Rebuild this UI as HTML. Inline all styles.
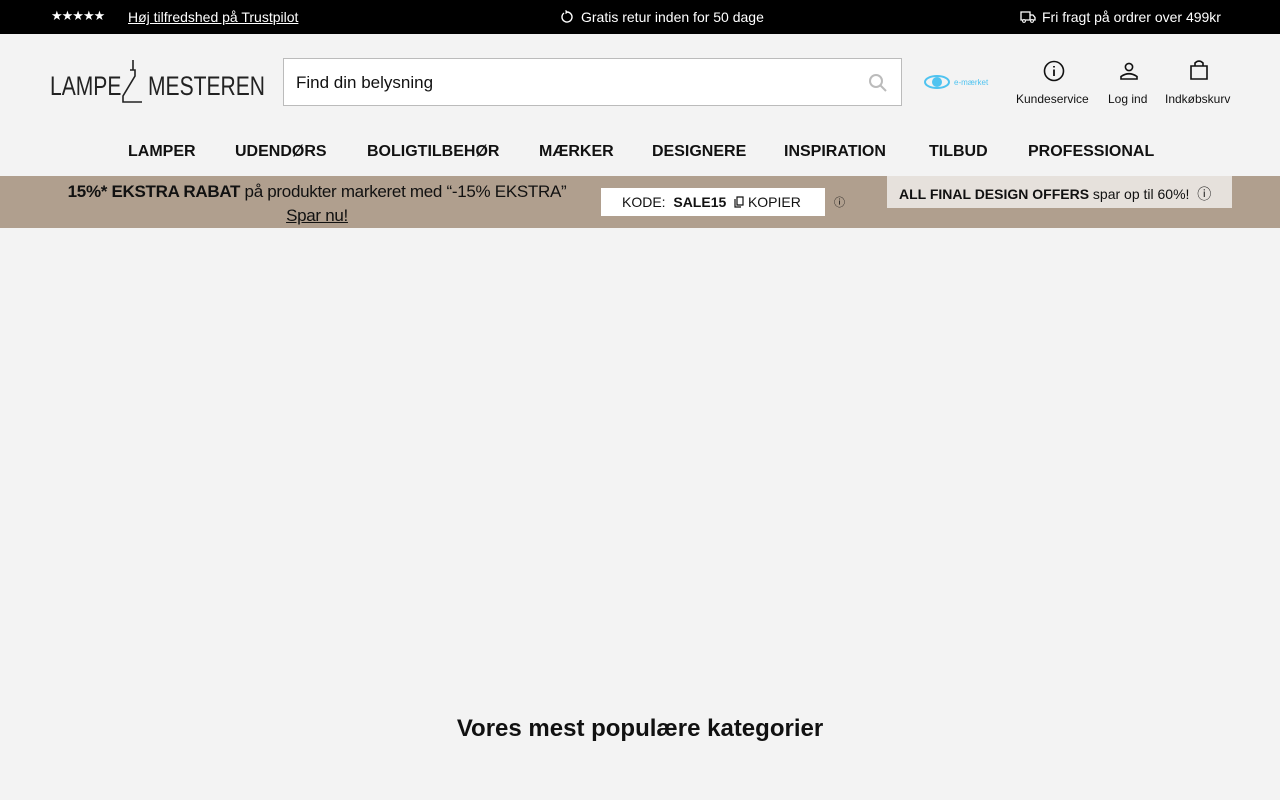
<!DOCTYPE html>
<html><head><meta charset="utf-8"><style>
*{margin:0;padding:0;box-sizing:border-box}
body{width:1280px;height:800px;background:#f3f3f3;font-family:"Liberation Sans",sans-serif;color:#111;overflow:hidden;position:relative}
.top{position:absolute;top:0;left:0;width:1280px;height:34px;background:#000;color:#fff;font-size:14px}
.top span{position:absolute;top:9px}
.abs{position:absolute}
.nav{position:absolute;top:143px;left:0;width:1280px;font-size:16px;font-weight:bold}
.nav span{position:absolute}
.promo{position:absolute;top:176px;left:0;width:1280px;height:52px;background:#b09f8e}
.ic{position:absolute;font-size:12px;text-align:center}
.logo{position:absolute;top:71px;font-size:27px;color:#222;transform-origin:left top;white-space:nowrap}
</style></head><body>
<div class="top">
<span style="left:51px;top:8px;font-size:13px;letter-spacing:-1px">★★★★★</span>
<span style="left:128px;text-decoration:underline">Høj tilfredshed på Trustpilot</span>
<svg class="abs" style="left:560px;top:10px" width="14" height="14"><path d="M4 3A5 5 0 1 0 7 2L5.5 0.5M7 2L5.5 3.5" fill="none" stroke="#fff" stroke-width="1.4"/></svg>
<span style="left:581px">Gratis retur inden for 50 dage</span>
<svg class="abs" style="left:1020px;top:11px" width="16" height="12"><path d="M1 1H10V9H1ZM10 4H13L15 6.5V9H10" fill="none" stroke="#fff" stroke-width="1.3"/><circle cx="4" cy="10" r="1.4" fill="#000" stroke="#fff"/><circle cx="12" cy="10" r="1.4" fill="#000" stroke="#fff"/></svg>
<span style="left:1042px">Fri fragt på ordrer over 499kr</span>
</div>
<div class="logo" style="left:50px;transform:scaleX(0.78)">LAMPE</div>
<div class="logo" style="left:148px;transform:scaleX(0.78)">MESTEREN</div>
<svg class="abs" style="left:118px;top:58px" width="30" height="46"><path d="M15 2V12M12 12H17V18L5 38V44H24" fill="none" stroke="#222" stroke-width="1.6"/></svg>
<div class="abs" style="left:283px;top:58px;width:619px;height:48px;background:#fff;border:1px solid #bbb"><span class="abs" style="left:12px;top:14px;font-size:17px">Find din belysning</span>
<svg class="abs" style="left:584px;top:14px" width="20" height="20"><circle cx="8" cy="8" r="6" fill="none" stroke="#bbb" stroke-width="2"/><path d="M12.5 12.5L18 18" stroke="#bbb" stroke-width="2"/></svg></div>
<svg class="abs" style="left:924px;top:73px" width="66" height="18"><ellipse cx="13" cy="9" rx="12" ry="6" fill="none" stroke="#4fc3f0" stroke-width="2"/><circle cx="13" cy="9" r="5" fill="#4fc3f0"/><text x="30" y="12" font-size="8" fill="#4fc3f0" font-family="Liberation Sans">e-mærket</text></svg>
<svg class="abs" style="left:1043px;top:60px" width="22" height="22"><circle cx="11" cy="11" r="9.5" fill="none" stroke="#111" stroke-width="1.6"/><path d="M11 9.5V16M11 6V7.5" stroke="#111" stroke-width="1.8"/></svg>
<svg class="abs" style="left:1118px;top:61px" width="22" height="20"><circle cx="11" cy="6" r="3.6" fill="none" stroke="#111" stroke-width="1.6"/><path d="M3 18V15.5Q11 10 19 15.5V18Z" fill="none" stroke="#111" stroke-width="1.6"/></svg>
<svg class="abs" style="left:1188px;top:59px" width="22" height="22"><path d="M3 7H19V20H3Z M7 7V4Q11 0 15 4V7" fill="none" stroke="#111" stroke-width="1.6"/></svg>
<div class="ic" style="left:1016px;top:92px">Kundeservice</div>
<div class="ic" style="left:1108px;top:92px">Log ind</div>
<div class="ic" style="left:1165px;top:92px">Indkøbskurv</div>
<div class="nav">
<span style="left:128px">LAMPER</span><span style="left:235px">UDENDØRS</span><span style="left:367px">BOLIGTILBEHØR</span><span style="left:539px">MÆRKER</span><span style="left:652px">DESIGNERE</span><span style="left:784px">INSPIRATION</span><span style="left:929px">TILBUD</span><span style="left:1028px">PROFESSIONAL</span>
</div>
<div class="promo">
<div class="abs" style="left:40px;width:554px;top:4px;text-align:center;font-size:17px;line-height:24px;letter-spacing:-0.3px"><b>15%* EKSTRA RABAT</b> på produkter markeret med “-15% EKSTRA”<br><u>Spar nu!</u></div>
<div class="abs" style="left:601px;top:12px;width:224px;height:28px;background:#fff;font-size:14px;padding:6px 0 0 21px">KODE:&nbsp; <b>SALE15</b> &nbsp;<svg width="10" height="12" style="vertical-align:-1px"><path d="M3 1H9V9H3ZM1 3V11H7" fill="none" stroke="#111" stroke-width="1.2"/></svg> KOPIER</div>
<div class="abs" style="left:834px;top:18px;font-size:11px">ⓘ</div>
<div class="abs" style="left:887px;top:0;width:345px;height:32px;background:#e6e1dc;font-size:14px;padding:8px 0 0 12px"><b>ALL FINAL DESIGN OFFERS</b> spar op til 60%! &nbsp;ⓘ</div>
</div>
<div class="abs" style="left:0;width:1280px;top:715px;text-align:center;font-size:24px;font-weight:bold">Vores mest populære kategorier</div>
</body></html>
